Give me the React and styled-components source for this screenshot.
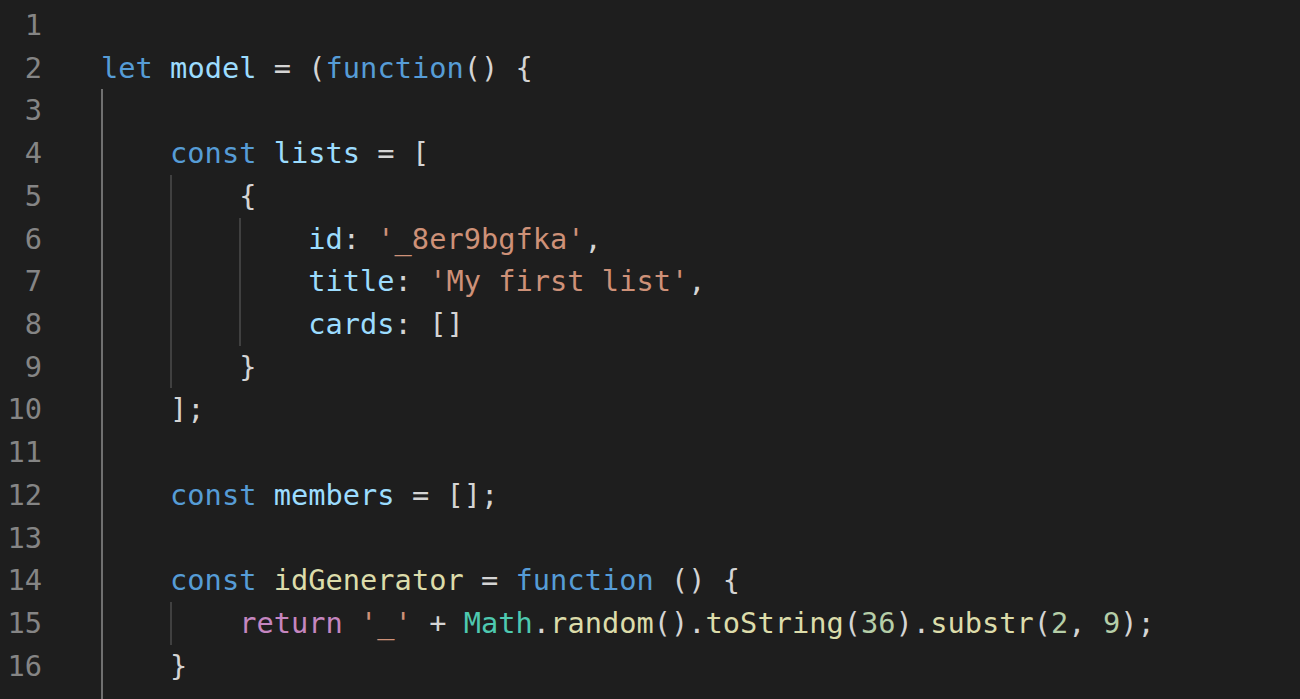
import React from "react";
import styled, { createGlobalStyle } from "styled-components";

const Global = createGlobalStyle`
  html, body {
    margin: 0;
    padding: 0;
    background: #1e1e1e;
    overflow: hidden;
  }
`;

const Editor = styled.div`
  width: 1300px;
  height: 699px;
  background: #1e1e1e;
  overflow: hidden;
  display: flex;
  flex-direction: column;
  padding-top: 4px;
  box-sizing: border-box;
  font-family: "DejaVu Sans Mono", "Liberation Mono", monospace;
  font-size: 28.7px;
  color: #d4d4d4;
`;

const Row = styled.div`
  display: flex;
  align-items: stretch;
  height: 42.72px;
  line-height: 42.72px;
  flex-shrink: 0;
`;

const LineNo = styled.div`
  width: 42px;
  text-align: right;
  color: #858585;
  flex-shrink: 0;
`;

const Code = styled.div`
  display: flex;
  align-items: stretch;
  margin-left: 59px;
  white-space: pre;
`;

const Indent = styled.span`
  display: block;
  width: 4ch;
  flex-shrink: 0;
  box-sizing: border-box;
  border-left: 2px solid
    ${(p) => (p.$guide ? (p.$active ? "#707070" : "#404040") : "transparent")};
`;

const colors = {
  kw: "#569cd6",
  var: "#9cdcfe",
  fn: "#dcdcaa",
  str: "#ce9178",
  ctrl: "#c586c0",
  cls: "#4ec9b0",
  num: "#b5cea8",
  p: "#d4d4d4",
};

const Tok = styled.span`
  color: ${(p) => colors[p.$kind] || "#d4d4d4"};
`;

const lines = [
  { indent: 0, tokens: [] },
  {
    indent: 0,
    tokens: [
      ["kw", "let"],
      ["p", " "],
      ["var", "model"],
      ["p", " = ("],
      ["kw", "function"],
      ["p", "() {"],
    ],
  },
  { indent: 1, tokens: [] },
  {
    indent: 1,
    tokens: [
      ["kw", "const"],
      ["p", " "],
      ["var", "lists"],
      ["p", " = ["],
    ],
  },
  { indent: 2, tokens: [["p", "{"]] },
  {
    indent: 3,
    tokens: [
      ["var", "id"],
      ["p", ": "],
      ["str", "'_8er9bgfka'"],
      ["p", ","],
    ],
  },
  {
    indent: 3,
    tokens: [
      ["var", "title"],
      ["p", ": "],
      ["str", "'My first list'"],
      ["p", ","],
    ],
  },
  {
    indent: 3,
    tokens: [
      ["var", "cards"],
      ["p", ": []"],
    ],
  },
  { indent: 2, tokens: [["p", "}"]] },
  { indent: 1, tokens: [["p", "];"]] },
  { indent: 1, tokens: [] },
  {
    indent: 1,
    tokens: [
      ["kw", "const"],
      ["p", " "],
      ["var", "members"],
      ["p", " = [];"],
    ],
  },
  { indent: 1, tokens: [] },
  {
    indent: 1,
    tokens: [
      ["kw", "const"],
      ["p", " "],
      ["fn", "idGenerator"],
      ["p", " = "],
      ["kw", "function"],
      ["p", " () {"],
    ],
  },
  {
    indent: 2,
    tokens: [
      ["ctrl", "return"],
      ["p", " "],
      ["str", "'_'"],
      ["p", " + "],
      ["cls", "Math"],
      ["p", "."],
      ["fn", "random"],
      ["p", "()."],
      ["fn", "toString"],
      ["p", "("],
      ["num", "36"],
      ["p", ")."],
      ["fn", "substr"],
      ["p", "("],
      ["num", "2"],
      ["p", ", "],
      ["num", "9"],
      ["p", ");"],
    ],
  },
  { indent: 1, tokens: [["p", "}"]] },
  { indent: 1, tokens: [], hideNo: true },
];

export default function App() {
  return (
    <>
      <Global />
      <Editor>
        {lines.map((line, i) => (
          <Row key={i}>
            <LineNo>{line.hideNo ? "" : i + 1}</LineNo>
            <Code>
              {Array.from({ length: line.indent }).map((_, lvl) => (
                <Indent key={lvl} $guide $active={lvl === 0} />
              ))}
              {line.tokens.map(([k, t], j) => (
                <Tok key={j} $kind={k}>
                  {t}
                </Tok>
              ))}
            </Code>
          </Row>
        ))}
      </Editor>
    </>
  );
}
